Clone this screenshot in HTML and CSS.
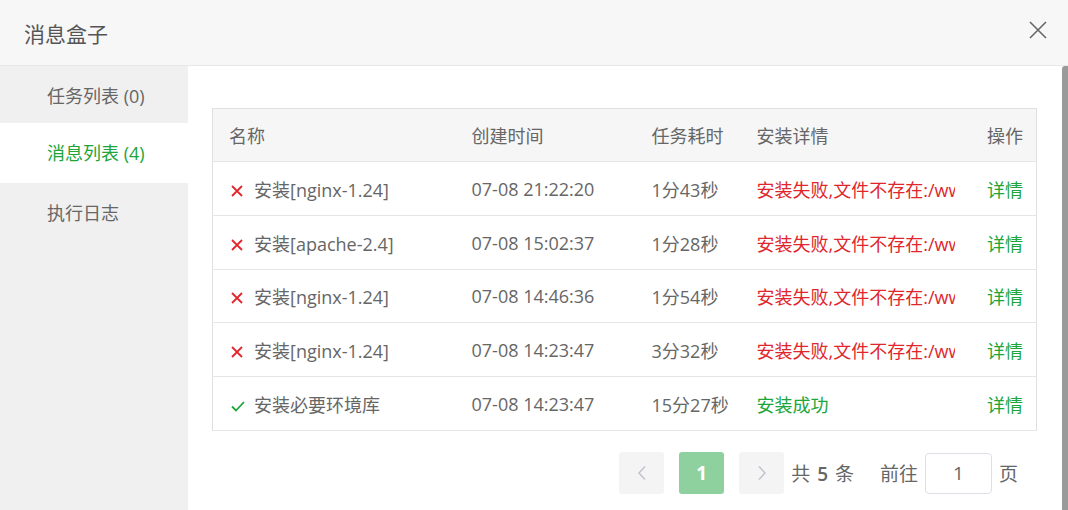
FILE: index.html
```html
<!DOCTYPE html>
<html lang="zh-CN">
<head>
    <meta charset="UTF-8">
    <meta name="viewport" content="width=device-width, initial-scale=1.0">
    <title>消息盒子</title>
    <link rel="stylesheet" href="styles.css">
</head>
<body>
    <div class="dialog">
        <div class="dialog-header">
            <span class="dialog-title">消息盒子</span>
            <button class="close-btn" aria-label="关闭">
                <svg width="18" height="18" viewBox="0 0 18 18"><path d="M1 1L17 17M17 1L1 17" stroke="#666" stroke-width="1.6" fill="none"/></svg>
            </button>
        </div>
        <div class="dialog-body">
            <ul class="side-menu">
                <li class="menu-item">任务列表 (0)</li>
                <li class="menu-item active">消息列表 (4)</li>
                <li class="menu-item">执行日志</li>
            </ul>
            <div class="main">
                <table class="msg-table">
                    <colgroup>
                        <col style="width: 243px">
                        <col style="width: 180px">
                        <col style="width: 105px">
                        <col style="width: 230px">
                        <col>
                    </colgroup>
                    <thead>
                        <tr>
                            <th>名称</th>
                            <th>创建时间</th>
                            <th>任务耗时</th>
                            <th>安装详情</th>
                            <th class="op">操作</th>
                        </tr>
                    </thead>
                    <tbody>
                        <tr>
                            <td><span class="icon"><svg width="12" height="12" viewBox="0 0 12 12"><path d="M1 1L11 11M11 1L1 11" stroke="#e3262c" stroke-width="1.8"/></svg></span>安装[nginx-1.24]</td>
                            <td>07-08 21:22:20</td>
                            <td>1分43秒</td>
                            <td><div class="detail fail-text">安装失败,文件不存在:/www</div></td>
                            <td class="op"><a href="#">详情</a></td>
                        </tr>
                        <tr>
                            <td><span class="icon"><svg width="12" height="12" viewBox="0 0 12 12"><path d="M1 1L11 11M11 1L1 11" stroke="#e3262c" stroke-width="1.8"/></svg></span>安装[apache-2.4]</td>
                            <td>07-08 15:02:37</td>
                            <td>1分28秒</td>
                            <td><div class="detail fail-text">安装失败,文件不存在:/www</div></td>
                            <td class="op"><a href="#">详情</a></td>
                        </tr>
                        <tr>
                            <td><span class="icon"><svg width="12" height="12" viewBox="0 0 12 12"><path d="M1 1L11 11M11 1L1 11" stroke="#e3262c" stroke-width="1.8"/></svg></span>安装[nginx-1.24]</td>
                            <td>07-08 14:46:36</td>
                            <td>1分54秒</td>
                            <td><div class="detail fail-text">安装失败,文件不存在:/www</div></td>
                            <td class="op"><a href="#">详情</a></td>
                        </tr>
                        <tr>
                            <td><span class="icon"><svg width="12" height="12" viewBox="0 0 12 12"><path d="M1 1L11 11M11 1L1 11" stroke="#e3262c" stroke-width="1.8"/></svg></span>安装[nginx-1.24]</td>
                            <td>07-08 14:23:47</td>
                            <td>3分32秒</td>
                            <td><div class="detail fail-text">安装失败,文件不存在:/www</div></td>
                            <td class="op"><a href="#">详情</a></td>
                        </tr>
                        <tr>
                            <td><span class="icon"><svg width="14" height="12" viewBox="0 0 14 12"><path d="M1 6.5L5 10.5L13 2" stroke="#20a53a" stroke-width="1.8" fill="none"/></svg></span>安装必要环境库</td>
                            <td>07-08 14:23:47</td>
                            <td>15分27秒</td>
                            <td><div class="detail ok-text">安装成功</div></td>
                            <td class="op"><a href="#">详情</a></td>
                        </tr>
                    </tbody>
                </table>
                <div class="pager">
                    <button class="page-btn arrow">
                        <svg width="10" height="16" viewBox="0 0 10 16"><path d="M8 1.5L2 8L8 14.5" stroke="#c0c4cc" stroke-width="1.5" fill="none"/></svg>
                    </button>
                    <button class="page-btn current">1</button>
                    <button class="page-btn arrow next">
                        <svg width="10" height="16" viewBox="0 0 10 16"><path d="M2 1.5L8 8L2 14.5" stroke="#c0c4cc" stroke-width="1.5" fill="none"/></svg>
                    </button>
                    <span class="total">共 <b>5</b> 条</span>
                    <span class="jump">前往</span>
                    <input class="jump-input" type="text" value="1">
                    <span class="jump-unit">页</span>
                </div>
            </div>
            <div class="scroll-thumb"></div>
        </div>
    </div>
</body>
</html>
```

FILE: styles.css
```css
html, body {
    margin: 0;
    height: 100%;
}
body {
    font-family: 'Open Sans', 'Noto Sans CJK SC', sans-serif;
    color: #666;
    background-color: #fff;
}
.dialog {
    display: flex;
    flex-direction: column;
    height: 510px;
    overflow: hidden;
}
.dialog-header {
    display: flex;
    align-items: center;
    justify-content: space-between;
    height: 65px;
    padding: 0 20px 0 24px;
    background-color: #f7f7f7;
    border-bottom: 1px solid #e8e8e8;
    flex-shrink: 0;
}
.dialog-title {
    font-size: 21px;
    color: #555;
}
.close-btn {
    display: flex;
    width: 20px;
    height: 20px;
    padding: 0;
    margin-top: -5px;
    border: none;
    background: none;
    align-items: center;
    justify-content: center;
    cursor: pointer;
}
.dialog-body {
    position: relative;
    display: flex;
    flex: 1;
}
.side-menu {
    width: 188px;
    margin: 0;
    padding: 0;
    list-style: none;
    background-color: #f0f0f0;
    flex-shrink: 0;
}
.menu-item {
    height: 60px;
    line-height: 60px;
    padding-left: 47px;
    font-size: 18px;
    color: #666;
    cursor: pointer;
}
.menu-item:first-child {
    height: 57px;
}
.menu-item.active {
    background-color: #fff;
    color: #20a53a;
}
.main {
    flex: 1;
    padding: 42px 31px 0 24px;
}
.msg-table {
    width: 825px;
    border-collapse: collapse;
    table-layout: fixed;
    border: 1px solid #e0e0e0;
    font-size: 18px;
}
.msg-table th {
    height: 52px;
    padding: 0 16px;
    text-align: left;
    font-weight: normal;
    color: #666;
    background-color: #f6f6f6;
    border-bottom: 1px solid #e6e6e6;
}
.msg-table td {
    height: 53px;
    padding: 0 16px;
    color: #666;
    white-space: nowrap;
    border-bottom: 1px solid #e6e6e6;
}
.msg-table tbody tr:nth-child(3) td {
    height: 52px;
}
.msg-table .op {
    text-align: right;
    padding-right: 13px;
}
.msg-table .op a {
    color: #20a53a;
    text-decoration: none;
}
.icon {
    display: inline-block;
    width: 16px;
    margin-left: 2px;
    margin-right: 7px;
}
.detail {
    overflow: hidden;
    white-space: nowrap;
}
.fail-text {
    color: #e0262c;
}
.ok-text {
    color: #20a53a;
}
.pager {
    display: flex;
    align-items: center;
    justify-content: flex-end;
    width: 825px;
    margin-top: 21px;
    padding-right: 19px;
    box-sizing: border-box;
    font-size: 19px;
    color: #666;
}
.page-btn {
    display: flex;
    align-items: center;
    justify-content: center;
    width: 45px;
    height: 42px;
    margin-right: 15px;
    padding: 0;
    border: none;
    border-radius: 3px;
    background-color: #f4f4f5;
    font-family: inherit;
    font-size: 19px;
    font-weight: bold;
    color: #fff;
}
.page-btn.current {
    background-color: #8fd19e;
}
.page-btn.next {
    margin-right: 7px;
}
.total b {
    margin: 0 2px;
    font-weight: 600;
}
.jump {
    margin-left: 26px;
    margin-right: 7px;
}
.jump-input {
    width: 67px;
    height: 41px;
    box-sizing: border-box;
    border: 1px solid #dcdfe6;
    border-radius: 4px;
    text-align: center;
    font-family: inherit;
    font-size: 19px;
    color: #666;
    outline: none;
}
.jump-unit {
    margin-left: 7px;
}
.scroll-thumb {
    position: absolute;
    top: 0;
    right: 0;
    bottom: 0;
    width: 6px;
    background-color: #9a9a9a;
    border-top-left-radius: 3px;
}
```
